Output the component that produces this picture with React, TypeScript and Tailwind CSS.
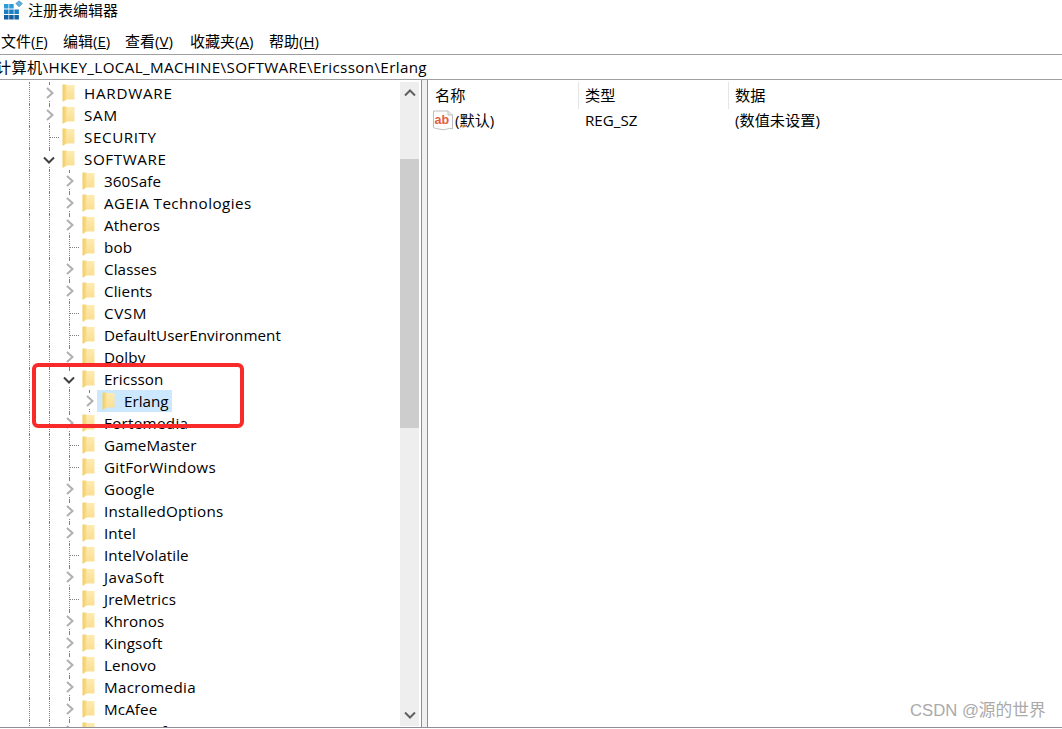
import React from "react";

type TreeRow = {
  name: string;
  level: number;
  state: "closed" | "open" | "leaf";
  selected?: boolean;
  track?: string;
};

const rows: TreeRow[] = [
  { name: "HARDWARE", level: 0, state: "closed", track: "tracking-[0.75px]" },
  { name: "SAM", level: 0, state: "closed", track: "tracking-[0.75px]" },
  { name: "SECURITY", level: 0, state: "leaf", track: "tracking-[0.6px]" },
  { name: "SOFTWARE", level: 0, state: "open", track: "tracking-[0.6px]" },
  { name: "360Safe", level: 1, state: "closed" },
  { name: "AGEIA Technologies", level: 1, state: "closed", track: "tracking-[0.45px]" },
  { name: "Atheros", level: 1, state: "closed" },
  { name: "bob", level: 1, state: "leaf" },
  { name: "Classes", level: 1, state: "closed" },
  { name: "Clients", level: 1, state: "closed" },
  { name: "CVSM", level: 1, state: "leaf", track: "tracking-[0.6px]" },
  { name: "DefaultUserEnvironment", level: 1, state: "leaf", track: "tracking-[0.05px]" },
  { name: "Dolby", level: 1, state: "closed" },
  { name: "Ericsson", level: 1, state: "open" },
  { name: "Erlang", level: 2, state: "closed", selected: true },
  { name: "Fortemedia", level: 1, state: "closed", track: "tracking-[0.3px]" },
  { name: "GameMaster", level: 1, state: "leaf" },
  { name: "GitForWindows", level: 1, state: "leaf", track: "tracking-[0.3px]" },
  { name: "Google", level: 1, state: "closed" },
  { name: "InstalledOptions", level: 1, state: "closed", track: "tracking-[0.2px]" },
  { name: "Intel", level: 1, state: "closed" },
  { name: "IntelVolatile", level: 1, state: "leaf" },
  { name: "JavaSoft", level: 1, state: "closed", track: "tracking-[0.5px]" },
  { name: "JreMetrics", level: 1, state: "leaf" },
  { name: "Khronos", level: 1, state: "closed" },
  { name: "Kingsoft", level: 1, state: "closed" },
  { name: "Lenovo", level: 1, state: "closed" },
  { name: "Macromedia", level: 1, state: "closed", track: "tracking-[0.3px]" },
  { name: "McAfee", level: 1, state: "closed" },
  { name: "Microsoft", level: 1, state: "closed" },
];

const menus = [
  { label: "文件", key: "F", width: "w-[62px]" },
  { label: "编辑", key: "E", width: "w-[62px]" },
  { label: "查看", key: "V", width: "w-[65px]" },
  { label: "收藏夹", key: "A", width: "w-[79px]" },
  { label: "帮助", key: "H", width: "w-[60px]" },
];

function AppIcon() {
  return (
    <svg width="22" height="21" viewBox="0 0 22 21" className="shrink-0">
      <rect x="3" y="4" width="15" height="16" fill="#fff" />
      <rect x="3" y="4" width="4.5" height="4.5" fill="#2d9bd8" />
      <rect x="8.2" y="4" width="4.5" height="4.5" fill="#2d9bd8" />
      <rect x="3" y="9.5" width="4.5" height="4.5" fill="#1b7fc4" />
      <rect x="8.2" y="9.5" width="4.5" height="4.5" fill="#1b7fc4" />
      <rect x="13.4" y="9.5" width="4.5" height="4.5" fill="#1b7fc4" />
      <rect x="3" y="15" width="4.5" height="4.5" fill="#12609f" />
      <rect x="8.2" y="15" width="4.5" height="4.5" fill="#12609f" />
      <rect x="13.4" y="15" width="4.5" height="4.5" fill="#12609f" />
      <path d="M18 0.8 L21.4 3.6 L18 6.8 L14.8 3.6 Z" fill="#5fb2de" stroke="#2a86c0" strokeWidth="0.6" />
    </svg>
  );
}

function Folder() {
  return (
    <svg width="13" height="18" viewBox="0 0 13 18" className="shrink-0">
      <defs>
        <linearGradient id="folderBack" x1="0" y1="0" x2="0" y2="1">
          <stop offset="0" stopColor="#fdebb0" />
          <stop offset="1" stopColor="#fadf94" />
        </linearGradient>
        <linearGradient id="folderFront" x1="0" y1="0" x2="1" y2="0">
          <stop offset="0" stopColor="#f2cb66" />
          <stop offset="1" stopColor="#fbdd8a" />
        </linearGradient>
      </defs>
      <rect x="3" y="1" width="9.5" height="14.5" fill="url(#folderBack)" />
      <path d="M0.5 0.5 L4.5 0.5 L4.5 15.5 L1.5 17.5 L0.5 17.5 Z" fill="url(#folderFront)" />
    </svg>
  );
}

function Chevron({ open }: { open: boolean }) {
  if (open) {
    return (
      <svg width="12" height="8" viewBox="0 0 12 8" className="absolute -left-[6px] top-[8px] bg-white">
        <path d="M1 1.5 L6 6.5 L11 1.5" fill="none" stroke="#404040" strokeWidth="2" />
      </svg>
    );
  }
  return (
    <svg width="8" height="12" viewBox="0 0 8 12" className="absolute -left-[3px] top-[5px] bg-white">
      <path d="M1 1 L6.5 6 L1 11" fill="none" stroke="#b0b0b0" strokeWidth="2" />
    </svg>
  );
}

function Expander({ state }: { state: TreeRow["state"] }) {
  if (state === "leaf") {
    return (
      <div className="w-[13px] h-full shrink-0 border-l border-dotted border-[#808080] flex items-center">
        <div className="w-[9px] border-t border-dotted border-[#808080]" />
      </div>
    );
  }
  return (
    <div className="w-[13px] h-full shrink-0 relative">
      <div className="absolute left-0 top-0 h-[2px] border-l border-dotted border-[#808080]" />
      <div className="absolute left-0 bottom-0 h-[3px] border-l border-dotted border-[#808080]" />
      <Chevron open={state === "open"} />
    </div>
  );
}

function Row({ row }: { row: TreeRow }) {
  return (
    <div className="h-[22px] shrink-0 flex items-center pl-[29px]">
      <div className="w-[20px] h-full shrink-0 border-l border-dotted border-[#808080]" />
      {row.level >= 1 && <div className="w-[20px] h-full shrink-0 border-l border-dotted border-[#808080]" />}
      {row.level >= 2 && <div className="w-[20px] h-full shrink-0 border-l border-dotted border-[#808080]" />}
      <Expander state={row.state} />
      {row.selected ? (
        <div className="-ml-[5px] h-full flex items-center pl-[5px] pr-[4px] bg-[#cce8ff]">
          <Folder />
          <span className="ml-[9px]">{row.name}</span>
        </div>
      ) : (
        <>
          <Folder />
          <span className={`ml-[9px] whitespace-nowrap ${row.track ?? "tracking-[0.1px]"}`}>{row.name}</span>
        </>
      )}
    </div>
  );
}

function Scrollbar() {
  return (
    <div className="w-[19px] mt-[2px] mb-[1px] bg-[#eeeeee] flex flex-col items-center shrink-0">
      <svg width="12" height="8" viewBox="0 0 12 8" className="mt-[7px] shrink-0">
        <path d="M1 6.5 L6 1.5 L11 6.5" fill="none" stroke="#606060" strokeWidth="2" />
      </svg>
      <div className="w-full h-[269px] mt-[62px] bg-[#cdcdcd] shrink-0" />
      <svg width="12" height="8" viewBox="0 0 12 8" className="mt-auto mb-[7px] shrink-0">
        <path d="M1 1.5 L6 6.5 L11 1.5" fill="none" stroke="#606060" strokeWidth="2" />
      </svg>
    </div>
  );
}

function StringIcon() {
  return (
    <svg width="20" height="21" viewBox="0 0 20 21" className="shrink-0">
      <path
        d="M0.5 1 L15 1 L19.5 5 L19.5 19 C16 17 13 20.5 9 19.5 C6 18.8 3 19 0.5 17.5 Z"
        fill="#fff"
        stroke="#bdbdbd"
      />
      <path d="M15 1 L15 5 L19.5 5" fill="#eeeeee" stroke="#bdbdbd" />
      <text x="1.5" y="13.5" fontSize="12.5" fontWeight="700" fill="#e2603f" fontFamily="'Liberation Sans', sans-serif">
        ab
      </text>
    </svg>
  );
}

export default function App() {
  return (
    <div className="w-[1062px] h-[729px] relative overflow-hidden bg-white text-black flex flex-col text-[15.2px] font-['Open_Sans','Noto_Sans_CJK_SC',sans-serif]">
      <div className="h-[20px] flex items-center pl-[1px] shrink-0">
        <AppIcon />
        <span className="ml-[5px] text-[15px]">注册表编辑器</span>
      </div>

      <div className="h-[34px] pt-[8px] flex items-start pl-[1px] shrink-0 text-[15px]">
        {menus.map((m) => (
          <div key={m.key} className={`${m.width} h-[26px] flex items-center whitespace-nowrap`}>
            {m.label}(<span className="underline">{m.key}</span>)
          </div>
        ))}
      </div>

      <div className="h-[26px] shrink-0 border-y border-[#a0a0a0] flex items-center whitespace-nowrap overflow-hidden tracking-[0.35px] -indent-[4px]">
        计算机\HKEY_LOCAL_MACHINE\SOFTWARE\Ericsson\Erlang
      </div>

      <div className="flex-1 min-h-0 flex border-b border-[#8e8e96] mb-[1px]">
        <div className="w-[421px] shrink-0 flex">
          <div className="w-[400px] overflow-hidden pt-[2px] shrink-0 flex flex-col">
            {rows.map((r) => (
              <Row key={r.name} row={r} />
            ))}
          </div>
          <Scrollbar />
        </div>
        <div className="w-[7px] shrink-0 bg-[#f0f0f0] border-x border-[#8e8e96]" />
        <div className="flex-1 min-w-0 flex flex-col">
          <div className="h-[27px] mt-[2px] shrink-0 flex items-center">
            <div className="w-[151px] h-full pl-[7px] flex items-center border-r border-[#e5e5e5]">名称</div>
            <div className="w-[150px] h-full pl-[6px] flex items-center border-r border-[#e5e5e5]">类型</div>
            <div className="pl-[6px]">数据</div>
          </div>
          <div className="h-[22px] shrink-0 flex items-center">
            <div className="w-[151px] pl-[5px] flex items-center">
              <StringIcon />
              <span className="ml-[2px]">(默认)</span>
            </div>
            <div className="w-[150px] pl-[6px]">REG_SZ</div>
            <div className="pl-[6px]">(数值未设置)</div>
          </div>
        </div>
      </div>

      <div className="absolute left-[32px] top-[363px] w-[212px] h-[65px] border-4 border-[#f92a2a] rounded-[6px]" />
      <div className="absolute left-[910px] top-[698px] text-[16.7px] text-[#aaaaaa] whitespace-nowrap font-['Liberation_Sans','Noto_Sans_CJK_SC',sans-serif]">
        CSDN @源的世界
      </div>
    </div>
  );
}
